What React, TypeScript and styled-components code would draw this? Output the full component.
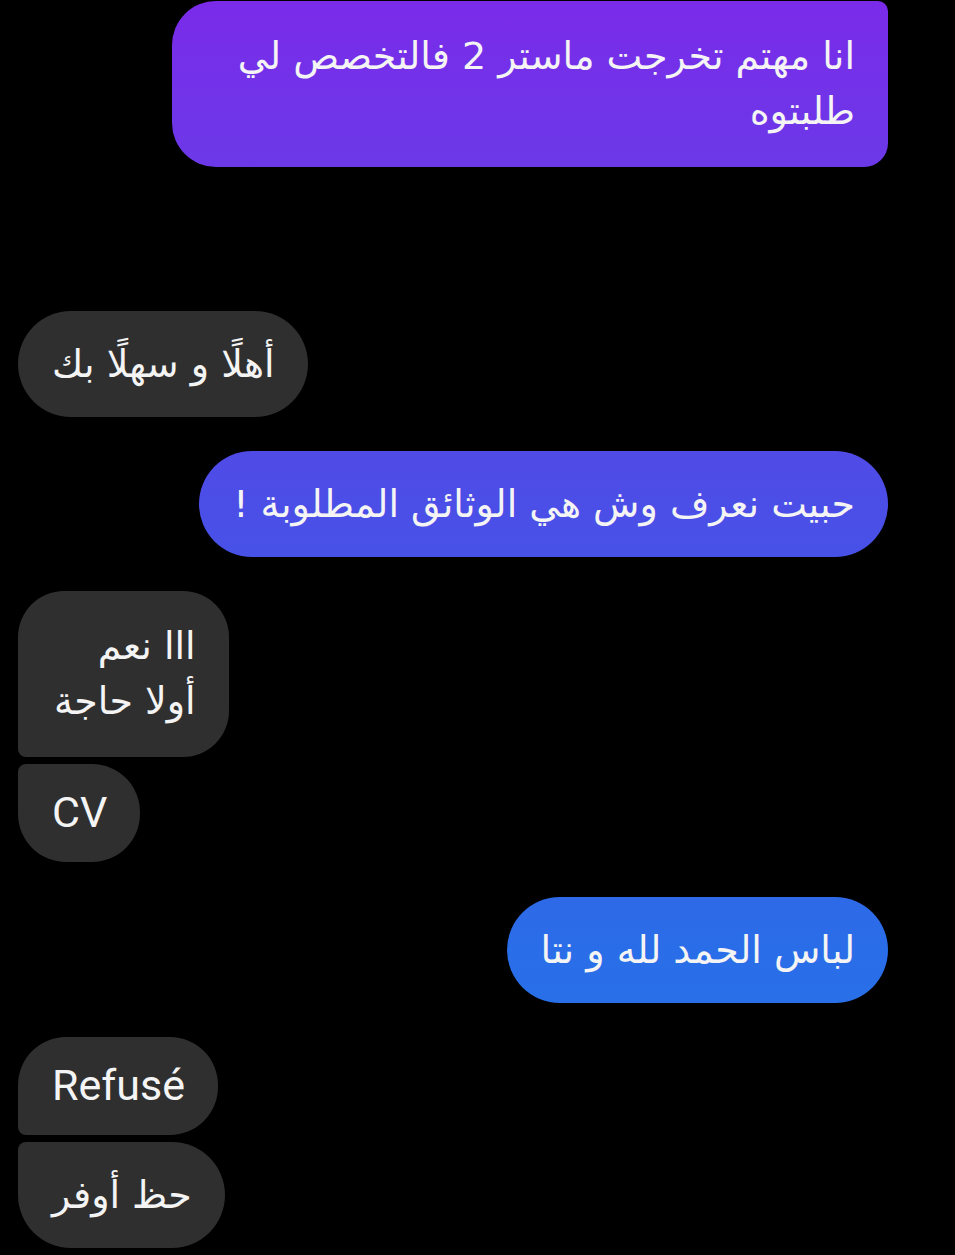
import React from "react";
import styled, { createGlobalStyle, css } from "styled-components";

const GlobalStyle = createGlobalStyle`
  html, body {
    margin: 0;
    padding: 0;
    background: #000;
  }
  body {
    font-family: Roboto, "DejaVu Sans", sans-serif;
    -webkit-font-smoothing: antialiased;
  }
`;

const Thread = styled.div`
  display: flex;
  flex-direction: column;
  padding: 1px 67px 8px 18px;
  min-height: 1255px;
  box-sizing: border-box;
  background: #000;
`;

type Side = "sent" | "received";

const Bubble = styled.div<{
  $side: Side;
  $radius: string;
  $gap: number;
  $latin?: boolean;
}>`
  align-self: ${(p) => (p.$side === "sent" ? "flex-end" : "flex-start")};
  margin-top: ${(p) => p.$gap}px;
  max-width: 716px;
  box-sizing: border-box;
  border-radius: ${(p) => p.$radius};
  color: #f4f4f4;
  text-align: right;
  ${(p) =>
    p.$latin
      ? css`
          font-family: Roboto, sans-serif;
          font-size: 43px;
          line-height: 53px;
          padding: 22px 33px 23px 34px;
        `
      : css`
          font-family: "DejaVu Sans", sans-serif;
          font-size: 38px;
          line-height: 55px;
          padding: 26px 33px 25px 34px;
        `}
  ${(p) =>
    p.$side === "sent"
      ? css`
          background: linear-gradient(
            180deg,
            #7a2be9 0px,
            #6b39e8 170px,
            #4b4ee7 505px,
            #2a6de8 950px,
            #1e7ae8 1255px
          );
          background-attachment: fixed;
        `
      : css`
          background: #2f2f2f;
        `}
`;

const Line = styled.span`
  display: block;
`;

export default function App() {
  return (
    <>
      <GlobalStyle />
      <Thread>
        <Bubble $side="sent" $radius="44px 10px 24px 44px" $gap={0} dir="rtl" style={{ paddingTop: 28, paddingBottom: 28, paddingLeft: 30 }}>
          انا مهتم تخرجت ماستر 2 فالتخصص لي طلبتوه
        </Bubble>

        <Bubble $side="received" $radius="53px" $gap={144} dir="rtl">
          أهلًا و سهلًا بك
        </Bubble>

        <Bubble $side="sent" $radius="53px" $gap={34} dir="rtl">
          حبيت نعرف وش هي الوثائق المطلوبة !
        </Bubble>

        <Bubble $side="received" $radius="46px 46px 46px 8px" $gap={34} dir="rtl" style={{ paddingTop: 28, paddingBottom: 28, paddingLeft: 36 }}>
          <Line>ااا نعم</Line>
          <Line>أولا حاجة</Line>
        </Bubble>

        <Bubble $side="received" $radius="8px 48px 48px 48px" $gap={7} $latin>
          CV
        </Bubble>

        <Bubble $side="sent" $radius="53px" $gap={35} dir="rtl">
          لباس الحمد لله و نتا
        </Bubble>

        <Bubble $side="received" $radius="48px 48px 48px 8px" $gap={34} $latin>
          Refusé
        </Bubble>

        <Bubble $side="received" $radius="8px 53px 53px 53px" $gap={7} dir="rtl">
          حظ أوفر
        </Bubble>
      </Thread>
    </>
  );
}
